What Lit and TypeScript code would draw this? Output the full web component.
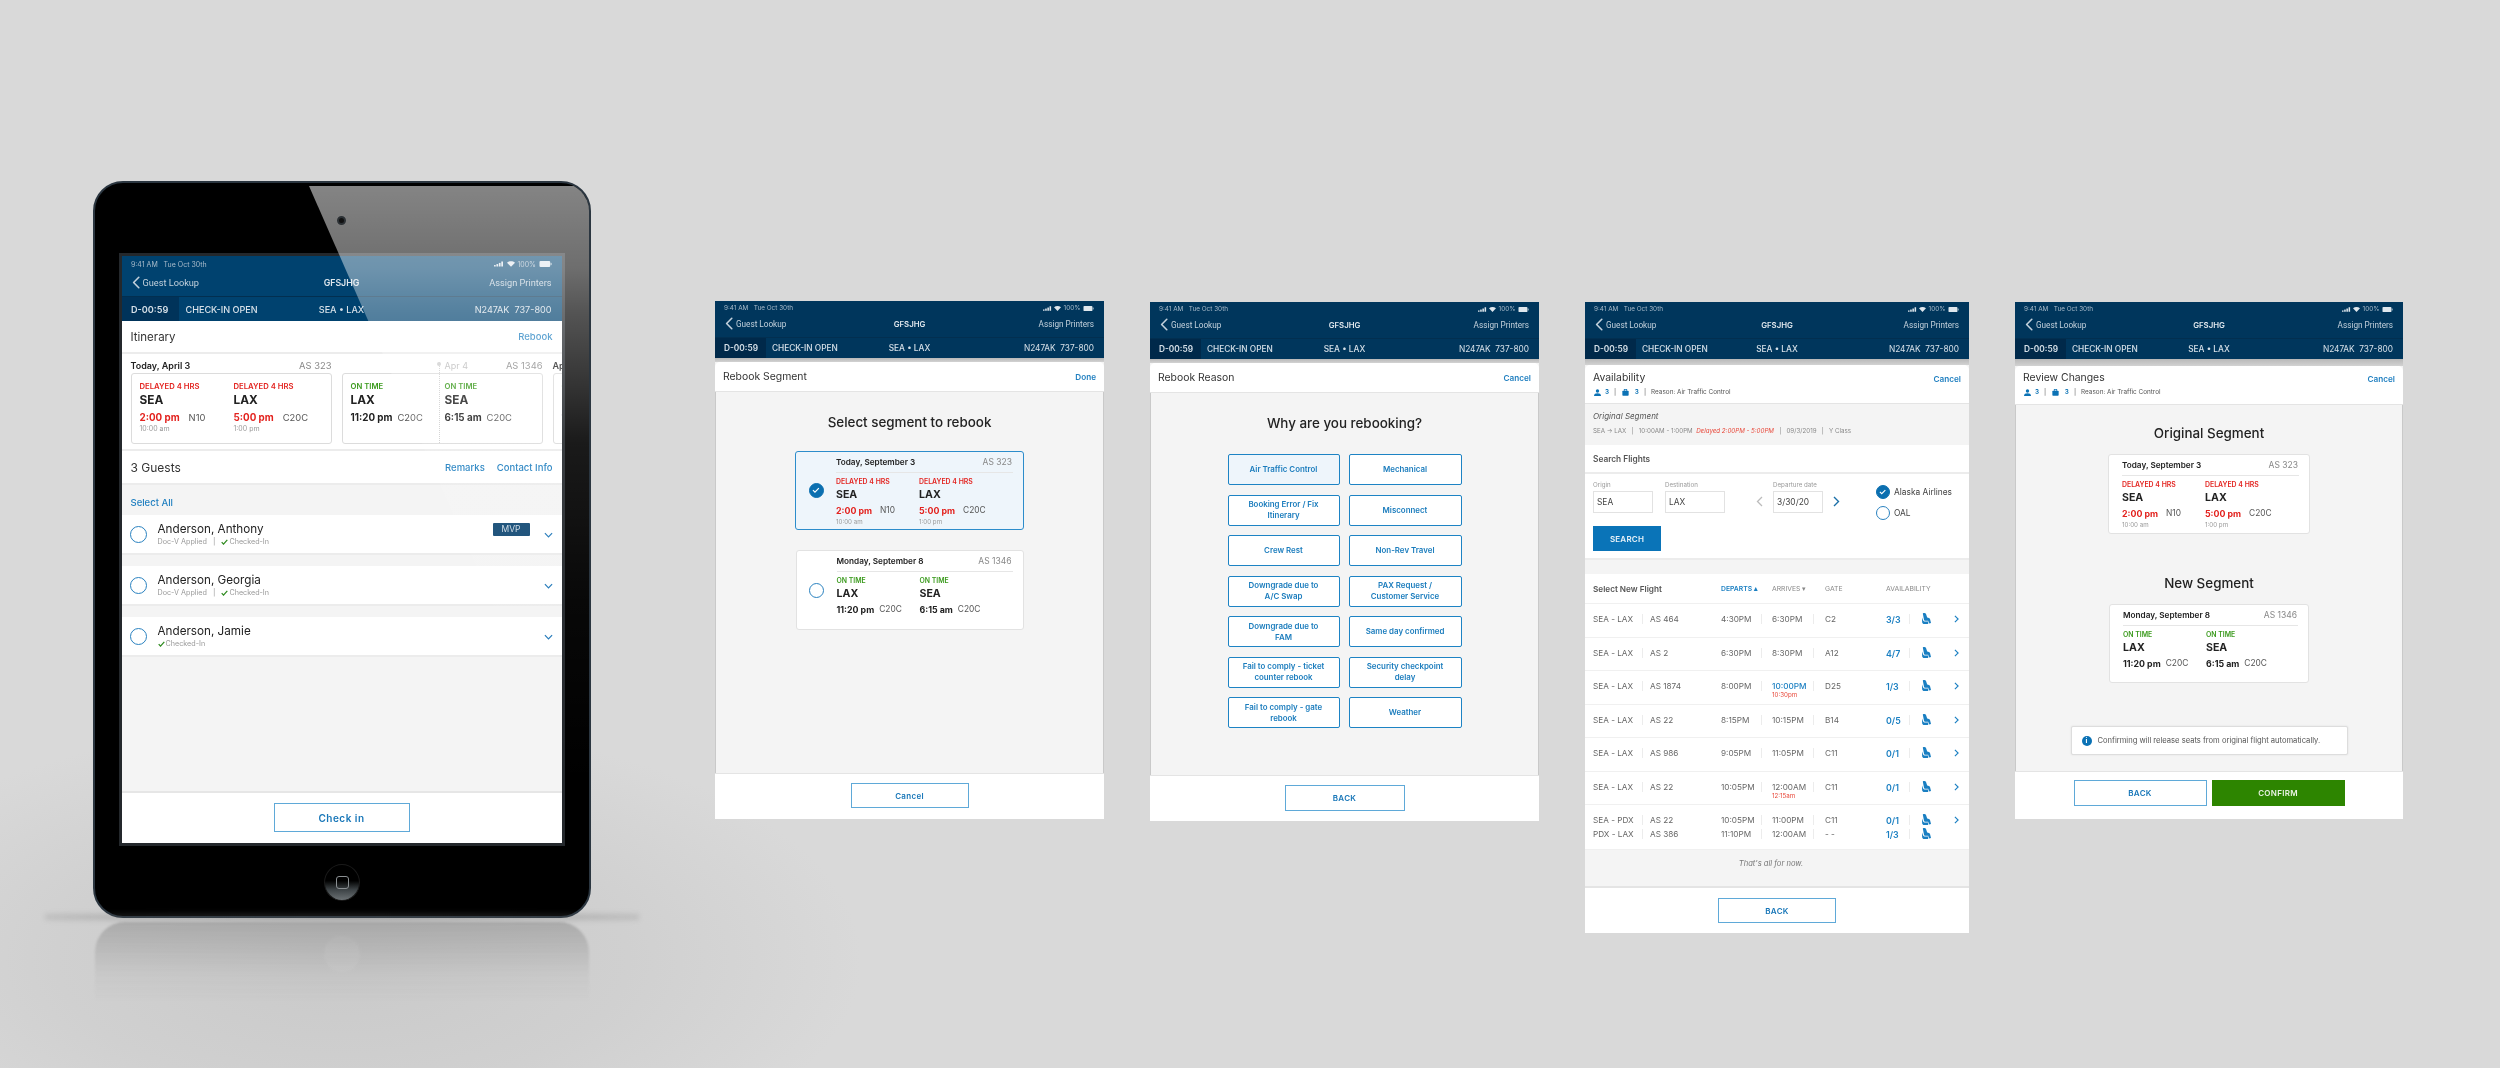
import { LitElement, html, css } from "lit";
import { customElement } from "lit/decorators.js";

const chevL = html`<svg class="chevl" viewBox="0 0 10 16"><path d="M8.5 1.5 2 8l6.5 6.5" fill="none" stroke="currentColor" stroke-width="2" stroke-linecap="round" stroke-linejoin="round"/></svg>`;
const signal = html`<svg class="i-sig" viewBox="0 0 14 7"><rect x="0" y="5" width="2.4" height="2" fill="currentColor"/><rect x="3.4" y="3.6" width="2.4" height="3.4" fill="currentColor"/><rect x="6.8" y="2" width="2.4" height="5" fill="currentColor"/><rect x="10.2" y="0" width="2.4" height="7" fill="currentColor"/></svg>`;
const wifi = html`<svg class="i-wifi" viewBox="0 0 10 7"><path d="M5 7 0 1.8C3-.6 7-.6 10 1.8z" fill="currentColor"/></svg>`;
const battery = html`<svg class="i-bat" viewBox="0 0 14 7"><rect x="0" y="0" width="12.5" height="7" rx="1.2" fill="currentColor"/><rect x="13" y="2.2" width="1" height="2.6" fill="currentColor"/></svg>`;
const check = html`<svg class="tick" viewBox="0 0 10 8"><path d="M1 4.2 3.6 7 9 1" fill="none" stroke="#2d8a1e" stroke-width="1.8"/></svg>`;
const chevD = html`<svg class="chevd" viewBox="0 0 10 6"><path d="M1 1l4 4 4-4" fill="none" stroke="#1f77b8" stroke-width="1.3"/></svg>`;
const chevR = html`<svg class="chevr" viewBox="0 0 6 10"><path d="M1 1l4 4-4 4" fill="none" stroke="#1a7fc2" stroke-width="1.4"/></svg>`;
const radioOff = html`<span class="radio"></span>`;
const radioOn = html`<span class="radio on"><svg viewBox="0 0 10 8"><path d="M1.2 4 3.8 6.6 8.8 1.4" fill="none" stroke="#fff" stroke-width="1.5"/></svg></span>`;
const person = html`<svg class="mini" viewBox="0 0 10 10"><circle cx="5" cy="2.8" r="2.4" fill="#0b72b5"/><path d="M0 10c0-3 2-4 5-4s5 1 5 4z" fill="#0b72b5"/></svg>`;
const bag = html`<svg class="mini" viewBox="0 0 10 10"><rect x="0.5" y="2.5" width="9" height="7" rx="1" fill="#0b72b5"/><rect x="3.2" y="0.8" width="3.6" height="2.4" fill="none" stroke="#0b72b5"/></svg>`;
const seat = html`<svg class="seat" viewBox="0 0 9 11"><path d="M.8.4C1.8-.3 3.6-.1 4 1L5.2 4.4 7 5C7.6 5.2 7.8 5.6 8 6.1L9 10 7.2 10.5 6.2 7.8H3.4C2.6 7.8 2.2 7.4 2 6.8Z" fill="#1a7fc2"/><path d="M0 4.6C.8 7 1.2 8.2 2.2 8.6H6.2V11H2.2C1 11 .4 10.4.2 9.5L0 7Z" fill="#1a7fc2"/></svg>`;

type Leg = { status: string; code: string; time: string; gate: string; old?: string };
const delayed: Leg[] = [
  { status: "DELAYED 4 HRS", code: "SEA", time: "2:00 pm", gate: "N10", old: "10:00 am" },
  { status: "DELAYED 4 HRS", code: "LAX", time: "5:00 pm", gate: "C20C", old: "1:00 pm" },
];
const ontime: Leg[] = [
  { status: "ON TIME", code: "LAX", time: "11:20 pm", gate: "C20C" },
  { status: "ON TIME", code: "SEA", time: "6:15 am", gate: "C20C" },
];

const flights = [
  [["SEA - LAX", "AS 464", "4:30PM", "6:30PM", "C2", "3/3"]],
  [["SEA - LAX", "AS 2", "6:30PM", "8:30PM", "A12", "4/7"]],
  [["SEA - LAX", "AS 1874", "8:00PM", "10:00PM", "D25", "1/3", "10:30pm"]],
  [["SEA - LAX", "AS 22", "8:15PM", "10:15PM", "B14", "0/5"]],
  [["SEA - LAX", "AS 986", "9:05PM", "11:05PM", "C11", "0/1"]],
  [["SEA - LAX", "AS 22", "10:05PM", "12:00AM", "C11", "0/1", "12:15am"]],
  [
    ["SEA - PDX", "AS 22", "10:05PM", "11:00PM", "C11", "0/1"],
    ["PDX - LAX", "AS 386", "11:10PM", "12:00AM", "- -", "1/3"],
  ],
];

const reasons = [
  ["Air Traffic Control", "Mechanical"],
  ["Booking Error / Fix\nItinerary", "Misconnect"],
  ["Crew Rest", "Non-Rev Travel"],
  ["Downgrade due to\nA/C Swap", "PAX Request /\nCustomer Service"],
  ["Downgrade due to\nFAM", "Same day confirmed"],
  ["Fail to comply - ticket\ncounter rebook", "Security checkpoint\ndelay"],
  ["Fail to comply - gate\nrebook", "Weather"],
];

@customElement("app-root")
export class AppRoot extends LitElement {
  static styles = css`
    :host { display: block; width: 2500px; height: 1068px; overflow: hidden; font-family: Inter, "Liberation Sans", sans-serif; color: #222; }
    * { box-sizing: border-box; }
    .stage { display: flex; align-items: flex-start; width: 2500px; height: 1068px; padding-left: 93px; background: radial-gradient(ellipse 520px 240px at 342px 960px, #c9c9c9 0%, #d0d0d0 55%, #d9d9d9 100%), #d9d9d9; }

    /* tablet */
    .tablet { position: relative; flex: none; width: 498px; height: 737px; margin-top: 181px; margin-right: 124px; background: #000; border-radius: 30px; border: 2px solid #2b3640; display: flex; flex-direction: column; align-items: center; padding-top: 33px; }
    .camera { position: relative; z-index: 2; width: 9px; height: 9px; border-radius: 50%; background: #111; border: 2px solid #2c3135; margin-bottom: 31px; margin-left: -1px; }
    .home { position: relative; z-index: 2; width: 36px; height: 37px; border-radius: 50%; margin-top: 21px; background: linear-gradient(#000 45%, #3c4245 70%, #6b7174 100%); display: flex; align-items: center; justify-content: center; border: 1px solid #1a1a1a; }
    .home i { width: 13px; height: 13px; border: 1px solid #8a8f92; border-radius: 3px; }
    .glare { position: absolute; inset: 0; border-radius: 28px; background: linear-gradient(180deg, rgba(255,255,255,.52) 0, rgba(255,255,255,.43) 85px, rgba(255,255,255,.33) 130px, rgba(255,255,255,.1) 260px, rgba(255,255,255,.03) 420px, rgba(255,255,255,0) 600px); clip-path: polygon(214px 3px, 498px 3px, 498px 645px, 496px 645px); pointer-events: none; }
    .smear { position: absolute; left: -50px; right: -50px; bottom: -5px; height: 8px; background: radial-gradient(ellipse at center, rgba(80,80,80,.42), rgba(100,100,100,.18) 72%, rgba(120,120,120,0) 100%); filter: blur(2.5px); }
    .reflect { position: absolute; left: 0; right: 0; top: 100%; margin-top: 6px; height: 80px; border-radius: 30px 30px 0 0; background: linear-gradient(180deg, rgba(90,90,90,.3), rgba(130,130,130,.08) 65%, rgba(160,160,160,0)); display: flex; justify-content: center; filter: blur(1px); }
    .reflect i { width: 36px; height: 36px; border-radius: 50%; margin-top: 14px; background: rgba(255,255,255,.05); }

    .screen { flex: none; display: flex; flex-direction: column; background: #f4f4f4; overflow: hidden; }
    .big { width: 440px; height: 587px; outline: 3px solid #24282c; margin-left: -1px; filter: blur(.35px); }
    .small { filter: blur(.3px); }
    .s2 { width: 389px; height: 518px; margin-top: 301px; margin-right: 46px; }
    .s3 { width: 389px; height: 519px; margin-top: 302px; margin-right: 46px; }
    .s4 { width: 384px; height: 631px; margin-top: 302px; margin-right: 46px; }
    .s5 { width: 388px; height: 517px; margin-top: 302px; }

    /* nav */
    .nav { flex: none; background: #00365c; color: #d6e0e8; }
    .big .nav { background: #00426f; }
    .status { height: 14px; display: flex; align-items: center; justify-content: space-between; padding: 0 10px 0 9px; font-size: 6.4px; color: #a9bccb; white-space: pre; }
    .big .status { height: 16px; font-size: 7px; padding: 0 10px 0 9.5px; }
    .status .ic { display: flex; align-items: center; gap: 2.5px; color: #dfe7ed; }
    .status .ic span { color: #a9bccb; }
    .i-sig { width: 9px; height: 5px; }
    .i-wifi { width: 7px; height: 5px; }
    .i-bat { width: 11px; height: 5px; }
    .big .i-sig { width: 10px; height: 6px; }
    .big .i-wifi { width: 8px; height: 6px; }
    .big .i-bat { width: 13px; height: 6px; }
    .row1 { height: 22px; padding: 0 10px 5px; display: grid; grid-template-columns: 1fr auto 1fr; align-items: center; font-family: Roboto, Inter, sans-serif; font-size: 8.2px; color: #c3d1dc; }
    .big .row1 { height: 24px; font-size: 9.2px; padding-bottom: 4px; }
    .row1 .back { display: flex; align-items: center; gap: 3px; }
    .chevl { width: 8px; height: 13px; }
    .row1 b { font-family: Inter, sans-serif; font-weight: 600; color: #dfe7ed; font-size: 7.8px; }
    .big .row1 b { font-size: 8.8px; }
    .row1 span:last-child { text-align: right; }
    .row2 { height: 21px; display: grid; grid-template-columns: 1fr auto 1fr; align-items: center; font-size: 8.3px; font-weight: 500; color: #d6e0e8; border-top: 1px solid #022f50; }
    .big .row2 { height: 25px; font-size: 9.1px; }
    .row2 .l { display: flex; align-items: center; height: 100%; }
    .timer { background: #00294a; height: 100%; display: flex; align-items: center; padding: 0 7px 0 9px; width: 51px; margin-right: 6px; white-space: nowrap; font-weight: 600; }
    .big .timer { width: 57px; margin-right: 7px; padding-left: 9.5px; background: #00335a; }
    .row2 .r { text-align: right; padding-right: 10px; font-weight: 400; white-space: pre; }
    .row2 .c { font-weight: 500; }

    /* tablet contents */
    .h-row { flex: none; height: 33px; background: #fff; display: flex; align-items: center; justify-content: space-between; padding: 0 9px; font-size: 11.5px; border-bottom: 2px solid #ececec; color: #333; }
    .link { color: #1f7fc0; font-size: 9.5px; font-weight: 500; }
    .links { display: flex; gap: 12px; }
    .itin { position: relative; flex: none; height: 97px; background: #fff; overflow: hidden; display: flex; gap: 10px; padding: 4px 0 0 9px; border-bottom: 2px solid #ececec; }
    .timeline { position: absolute; left: 317px; top: 8px; height: 81px; border-left: 1px dotted #cfcfcf; }
    .timeline::before { content: ""; position: absolute; left: -2.5px; top: 0; width: 4px; height: 4px; border-radius: 50%; background: #cfcfcf; }
    .seg { flex: none; width: 201px; }
    .seg-h { height: 15px; display: flex; align-items: center; justify-content: space-between; font-size: 9px; font-weight: 600; color: #222; }
    .seg-h span { color: #888; font-size: 9.4px; font-weight: 400; }
    .seg-h.faded { font-weight: 400; color: #bbb; padding-left: 103px; }
    .seg-c { height: 71px; border: 1px solid #dcdcdc; border-radius: 3px; display: grid; grid-template-columns: 94px 1fr; padding: 8px 0 0 8px; background: #fff; }
    .g-row { flex: none; height: 34px; background: #fff; display: flex; align-items: center; justify-content: space-between; padding: 0 9px; font-size: 12px; border-bottom: 2px solid #ececec; color: #333; }
    .sel { flex: none; height: 30px; display: flex; align-items: center; padding: 4px 9px 0; font-size: 9.5px; color: #1f7fc0; font-weight: 500; }
    .guest { flex: none; height: 40px; background: #fff; display: flex; align-items: center; padding: 1px 9px 0 8px; border-bottom: 2px solid #ececec; position: relative; }
    .guest + .guest { margin-top: 11px; }
    .guest .radio { width: 17px; height: 17px; margin-right: 11px; }
    .gname { font-size: 11.7px; color: #222; line-height: 14px; }
    .gsub { font-size: 7.2px; color: #999; line-height: 11px; display: flex; align-items: center; white-space: pre; }
    .tick { width: 7px; height: 6px; margin-right: 1px; }
    .mvp { margin-left: auto; width: 37px; height: 13px; background: #134a74; color: #cfdce6; font-size: 8.5px; display: flex; align-items: center; justify-content: center; margin-top: -11px; border-radius: 1px; }
    .chevd { width: 9px; height: 6px; margin-left: 14px; }
    .guest .push { margin-left: auto; }
    .spacer { flex: 1; }
    .foot { flex: none; background: #fff; display: flex; justify-content: center; align-items: flex-start; gap: 5px; }
    .tfoot { height: 52px; border-top: 2px solid #e6e6e6; padding-top: 10px; }
    .btn { display: flex; align-items: center; justify-content: center; border: 1px solid #5fa9d8; color: #1776b8; font-weight: 600; font-size: 8px; letter-spacing: .3px; background: #fff; }
    .tfoot .btn { width: 136px; height: 29px; font-size: 10px; letter-spacing: .5px; }

    /* modal */
    .gap { flex: none; background: linear-gradient(#b8b8b8, #d2d2d2); }
    .g4 { height: 4px; }
    .g5 { height: 6px; }
    .g7 { height: 7px; }
    .mhead { flex: none; background: #fff; border-radius: 5px 5px 0 0; display: flex; justify-content: space-between; align-items: center; padding: 0 8px; height: 30px; font-size: 10.4px; color: #333; border-bottom: 1px solid #e4e4e4; }
    .mhead .link { font-size: 8.2px; font-weight: 600; }
    .mhead.two { height: 39px; align-items: flex-start; padding-top: 5px; }
    .mhead.two .link { margin-top: 3px; }
    .s4 .mhead.two { padding-top: 6px; }
    .mhead small { display: flex; align-items: center; font-size: 6.4px; color: #555; gap: 5px; margin-top: 4px; white-space: pre; }
    .mhead small b { color: #0b72b5; font-weight: 600; }
    .mini { width: 7px; height: 7px; margin-left: 1px; margin-right: -1px; }
    .mbody { flex: 1; display: flex; flex-direction: column; align-items: center; background: #f4f4f4; border-left: 1px solid #c9c9c9; border-right: 1px solid #c9c9c9; min-height: 0; }
    .mtitle { font-size: 13.4px; font-weight: 500; color: #222; text-align: center; line-height: 16px; margin-top: 22px; }
    .mtitle.t20 { margin-top: 20px; }
    .mtitle.t41 { margin-top: 41px; }
    .mfoot { height: 46px; padding-top: 9px; border-top: 1px solid #e4e4e4; }
    .mfoot .btn { width: 120px; height: 26px; }
    .mfoot .btn.w118 { width: 118px; height: 25px; }
    .mfoot .btn.w133 { width: 133px; }
    .s4 .mfoot { padding-top: 10px; }
    .s5 .mfoot { height: 48px; padding-top: 8px; }

    .card { background: #fff; border: 1px solid #e2e2e2; border-radius: 3px; display: flex; }
    .card.sel-on { background: #eef5fb; border: 1.5px solid #2c8ccb; }
    .card.pick1 { width: 229px; height: 79px; margin-top: 21px; }
    .card.pick2 { width: 228px; height: 80px; margin-top: 20px; }
    .card.rev1 { width: 202px; height: 80px; margin-top: 13px; }
    .card.rev2 { width: 200px; height: 79px; margin-top: 13px; }
    .card .rad { flex: none; width: 40px; display: flex; align-items: center; justify-content: center; }
    .card .rad .radio { width: 15px; height: 15px; }
    .card .pad { flex: none; width: 13px; }
    .card .inner { flex: 1; padding-right: 10px; min-width: 0; }
    .c-h { height: 21px; display: flex; justify-content: space-between; align-items: center; border-bottom: 1px solid #e6e6e6; font-size: 8.2px; font-weight: 600; color: #222; white-space: nowrap; }
    .c-h span { font-weight: 400; color: #888; font-size: 8.5px; padding-right: 1px; }
    .legs { display: grid; grid-template-columns: 83px 1fr; padding-top: 4px; }
    .leg { min-width: 0; }
    .st { font-size: 6.9px; font-weight: 600; line-height: 9px; white-space: nowrap; color: #e3231f; }
    .st.ok { color: #3a9a1c; }
    .code { font-size: 10.6px; font-weight: 700; line-height: 14px; color: #222; margin-top: 2px; }
    .tm { display: flex; align-items: center; font-size: 8.8px; font-weight: 700; line-height: 13px; margin-top: 2px; white-space: nowrap; color: #222; }
    .tm.red { color: #e3231f; }
    .tm i { font-style: normal; font-weight: 400; color: #555; margin-left: 8px; font-size: 8.4px; }
    .tm.ok i { margin-left: 5px; }
    .oldt { font-size: 6.2px; color: #999; line-height: 8px; margin-top: 1px; white-space: nowrap; }
    .big .st { font-size: 7.7px; line-height: 10px; }
    .big .code { font-size: 11.8px; margin-top: 1px; line-height: 15px; }
    .big .tm { font-size: 9.8px; margin-top: 3px; }
    .big .tm i { font-size: 9.4px; margin-left: 9px; }
    .big .tm.ok i { margin-left: 5px; }
    .big .oldt { font-size: 7px; line-height: 10px; margin-top: 0; }

    .radio { display: inline-flex; flex: none; width: 14px; height: 14px; border-radius: 50%; border: 1.4px solid #2a82c0; align-items: center; justify-content: center; background: transparent; }
    .radio.on { background: #0b6fb0; border-color: #0b6fb0; }
    .radio.on svg { width: 60%; }

    .grid { display: grid; grid-template-columns: 112px 113px; column-gap: 9px; row-gap: 9.5px; margin-top: 23px; }
    .rbtn { height: 31px; border: 1px solid #1d83c4; border-radius: 2px; background: #fff; color: #1a7cbd; font-size: 7.9px; font-weight: 600; line-height: 11px; display: flex; align-items: center; justify-content: center; text-align: center; white-space: pre-line; }
    .rbtn.on { background: #eef5fb; }

    /* availability */
    .orig { flex: none; height: 41px; background: #f4f4f4; padding: 6px 8px 0; }
    .orig em { font-size: 8px; color: #555; display: block; line-height: 12px; }
    .orig div { font-size: 6.2px; color: #888; margin-top: 5px; white-space: pre; display: flex; }
    .orig div em { font-size: 6.2px; color: #e8483a; display: inline; line-height: inherit; }
    .sf { flex: none; height: 29px; background: #fff; display: flex; align-items: center; padding: 0 8px; font-size: 8.3px; font-weight: 600; color: #555; border-bottom: 2px solid #ececec; }
    .form { flex: none; height: 86px; background: #fff; padding: 6px 8px 0; border-bottom: 2px solid #ececec; display: flex; flex-direction: column; }
    .f-row { display: flex; align-items: flex-start; }
    .fld { display: flex; flex-direction: column; font-size: 6.2px; color: #999; line-height: 10px; }
    .fld span { margin-top: 1px; height: 22px; border: 1px solid #e2e2e2; color: #444; font-size: 8.4px; display: flex; align-items: center; padding-left: 3px; width: 60px; }
    .fld.d span { width: 50px; }
    .fld.m12 { margin-right: 12px; }
    .fld.m31 { margin-right: 31px; }
    .fld.m10 { margin-right: 10px; }
    .arrow { width: 7px; height: 11px; margin-top: 16px; }
    .arrow.prev { margin-right: 10px; }
    .air { margin-left: auto; margin-right: 9px; display: flex; flex-direction: column; gap: 7px; margin-top: 5px; font-size: 8.4px; color: #444; }
    .air div { display: flex; align-items: center; gap: 4px; }
    .search { width: 68px; height: 25px; background: #0a74b8; color: #e8f2f8; font-size: 8px; font-weight: 600; display: flex; align-items: center; justify-content: center; margin-top: 6px; letter-spacing: .2px; }
    .lhead { flex: none; margin-top: 14px; height: 30px; background: #fff; display: grid; align-items: center; font-size: 6.8px; color: #888; border-bottom: 1px solid #f0f0f0; grid-template-columns: 128px 51px 53px 61px 1fr; padding-left: 8px; }
    .lhead b { font-size: 8.2px; font-weight: 600; color: #555; }
    .lhead .act { color: #1a7fc2; font-weight: 600; }
    .frow { flex: none; background: #fff; border-bottom: 1px solid #f0f0f0; height: 33.5px; padding: 10px 0 0 8px; display: grid; grid-template-columns: 57px 71px 51px 53px 61px 36px 32px 1fr; grid-auto-rows: 14px; font-size: 8.2px; color: #666; position: relative; }
    .frow.tall { height: 45px; }
    .frow > span { white-space: nowrap; display: flex; align-items: flex-start; line-height: 11px; }
    .frow .v { position: relative; }
    .frow .v::after { content: ""; position: absolute; top: 0; height: 10px; width: 1px; background: #ececec; }
    .frow .a1::after { left: 49px; }
    .frow .a2::after { left: 40px; }
    .frow .a3::after { left: 41px; }
    .frow .a4::after { left: 23px; }
    .frow .av { color: #1a7fc2; font-weight: 600; font-size: 8.8px; }
    .frow .blue { color: #1a7fc2; font-weight: 500; }
    .frow .late { position: absolute; color: #e8483a; font-size: 6.2px; line-height: 8px; top: 20px; left: 187px; }
    .seat { width: 9px; height: 11px; margin-top: -1px; }
    .chevr { width: 5px; height: 8px; margin-top: 1px; }
    .done { flex: 1; background: #f4f4f4; font-size: 7.6px; font-style: italic; color: #777; text-align: center; padding-top: 9px; padding-right: 12px; border-bottom: 1px solid #e4e4e4; }

    /* review */
    .info { width: 277px; height: 29px; margin-bottom: 16px; background: #fff; border: 1px solid #ddd; border-radius: 2px; box-shadow: 0 0 2px rgba(0,0,0,.1); font-size: 7.6px; color: #555; display: flex; align-items: center; padding-left: 10px; gap: 6px; white-space: nowrap; }
    .info i { width: 10px; height: 10px; border-radius: 50%; background: #0b72b5; color: #fff; font-size: 7px; font-style: normal; font-weight: 700; display: flex; align-items: center; justify-content: center; }
    .mfoot .btn.green { background: #2d8500; border-color: #2d8500; color: #e9f3e2; }
  `;

  private navbar() {
    return html`<div class="nav">
      <div class="status"><span>9:41 AM   Tue Oct 30th</span><span class="ic">${signal}${wifi}<span>100%</span>${battery}</span></div>
      <div class="row1"><span class="back">${chevL}Guest Lookup</span><b>GFSJHG</b><span>Assign Printers</span></div>
      <div class="row2"><div class="l"><span class="timer">D-00:59</span><span>CHECK-IN OPEN</span></div><span class="c">SEA • LAX</span><span class="r">N247AK  737-800</span></div>
    </div>`;
  }

  private legs(legs: Leg[]) {
    return legs.map((l) => {
      const ok = !l.old;
      return html`<div class="leg">
        <div class="st ${ok ? "ok" : ""}">${l.status}</div>
        <div class="code">${l.code}</div>
        <div class="tm ${ok ? "ok" : "red"}">${l.time}<i>${l.gate}</i></div>
        ${l.old ? html`<div class="oldt">${l.old}</div>` : ""}
      </div>`;
    });
  }

  private segCard(date: string, fl: string, legs: Leg[], cls: string, opt: { on?: boolean; radio?: boolean } = {}) {
    return html`<div class="card ${cls} ${opt.on ? "sel-on" : ""}">
      ${opt.radio ? html`<div class="rad">${opt.on ? radioOn : radioOff}</div>` : html`<div class="pad"></div>`}
      <div class="inner"><div class="c-h">${date}<span>${fl}</span></div><div class="legs">${this.legs(legs)}</div></div>
    </div>`;
  }

  private tablet() {
    const seg = (d: string, f: string, legs: Leg[], faded = false) => html`<div class="seg">
      <div class="seg-h ${faded ? "faded" : ""}">${d}<span>${f}</span></div>
      <div class="seg-c">${this.legs(legs)}</div>
    </div>`;
    const guest = (name: string, doc: boolean, mvp = false) => html`<div class="guest">${radioOff}
      <div><div class="gname">${name}</div><div class="gsub">${doc ? html`Doc-V Applied   |   ` : ""}${check}Checked-In</div></div>
      ${mvp ? html`<span class="mvp">MVP</span>` : html`<span class="push"></span>`}${chevD}</div>`;
    return html`<div class="tablet">
      <div class="smear"></div>
      <div class="reflect"><i></i></div>
      <div class="camera"></div>
      <div class="screen big">
        ${this.navbar()}
        <div class="h-row">Itinerary<span class="link">Rebook</span></div>
        <div class="itin">
          ${seg("Today, April 3", "AS 323", delayed)}
          ${seg("Apr 4", "AS 1346", ontime, true)}
          ${seg("Apr 5", "AS 1346", ontime)}
          <div class="timeline"></div>
        </div>
        <div class="g-row">3 Guests<span class="links"><span class="link">Remarks</span><span class="link">Contact Info</span></span></div>
        <div class="sel">Select All</div>
        ${guest("Anderson, Anthony", true, true)}
        ${guest("Anderson, Georgia", true)}
        ${guest("Anderson, Jamie", false)}
        <div class="spacer"></div>
        <div class="foot tfoot"><div class="btn">Check in</div></div>
      </div>
      <div class="home"><i></i></div>
      <div class="glare"></div>
    </div>`;
  }

  private rebook() {
    return html`<div class="screen small s2">
      ${this.navbar()}
      <div class="gap g4"></div>
      <div class="mhead">Rebook Segment<span class="link">Done</span></div>
      <div class="mbody">
        <div class="mtitle">Select segment to rebook</div>
        ${this.segCard("Today, September 3", "AS 323", delayed, "pick1", { on: true, radio: true })}
        ${this.segCard("Monday, September 8", "AS 1346", ontime, "pick2", { radio: true })}
      </div>
      <div class="foot mfoot"><div class="btn w118">Cancel</div></div>
    </div>`;
  }

  private reason() {
    return html`<div class="screen small s3">
      ${this.navbar()}
      <div class="gap g4"></div>
      <div class="mhead">Rebook Reason<span class="link">Cancel</span></div>
      <div class="mbody">
        <div class="mtitle">Why are you rebooking?</div>
        <div class="grid">
          ${reasons.map((r, i) => r.map((t, j) => html`<div class="rbtn ${i === 0 && j === 0 ? "on" : ""}">${t}</div>`))}
        </div>
      </div>
      <div class="foot mfoot"><div class="btn">BACK</div></div>
    </div>`;
  }

  private sub() {
    return html`<small>${person}<b>3</b><span>|</span>${bag}<b> 3</b><span>|</span><span>Reason: Air Traffic Control</span></small>`;
  }

  private avail() {
    return html`<div class="screen small s4">
      ${this.navbar()}
      <div class="gap g5"></div>
      <div class="mhead two"><div>Availability${this.sub()}</div><span class="link">Cancel</span></div>
      <div class="orig"><em>Original Segment</em><div>SEA → LAX   |   10:00AM - 1:00PM  <em>Delayed 2:00PM - 5:00PM</em>   |   09/3/2019   |   Y Class</div></div>
      <div class="sf">Search Flights</div>
      <div class="form">
        <div class="f-row">
          <div class="fld m12">Origin<span>SEA</span></div>
          <div class="fld m31">Destination<span>LAX</span></div>
          <svg class="arrow prev" viewBox="0 0 7 11"><path d="M6 1 1.5 5.5 6 10" fill="none" stroke="#bbb" stroke-width="1.3"/></svg>
          <div class="fld d m10">Departure date<span>3/30/20</span></div>
          <svg class="arrow" viewBox="0 0 7 11"><path d="M1 1l4.5 4.5L1 10" fill="none" stroke="#1a6fa8" stroke-width="1.4"/></svg>
          <div class="air"><div>${radioOn}Alaska Airlines</div><div>${radioOff}OAL</div></div>
        </div>
        <div class="search">SEARCH</div>
      </div>
      <div class="lhead"><b>Select New Flight</b><span class="act">DEPARTS ▴</span><span>ARRIVES ▾</span><span>GATE</span><span>AVAILABILITY</span></div>
      ${flights.map((f) => html`<div class="frow ${f.length > 1 ? "tall" : ""}">
        ${f.map((r, i) => html`
          <span class="v a1">${r[0]}</span><span>${r[1]}</span><span class="v a2">${r[2]}</span>
          <span class="v a3 ${r[6] === "10:30pm" ? "blue" : ""}">${r[3]}</span><span>${r[4]}</span>
          <span class="v a4 av">${r[5]}</span><span>${seat}</span><span>${i === 0 ? chevR : ""}</span>
          ${r[6] ? html`<span class="late">${r[6]}</span>` : ""}`)}
      </div>`)}
      <div class="done">That's all for now.</div>
      <div class="foot mfoot"><div class="btn w118">BACK</div></div>
    </div>`;
  }

  private review() {
    return html`<div class="screen small s5">
      ${this.navbar()}
      <div class="gap g7"></div>
      <div class="mhead two"><div>Review Changes${this.sub()}</div><span class="link">Cancel</span></div>
      <div class="mbody">
        <div class="mtitle t20">Original Segment</div>
        ${this.segCard("Today, September 3", "AS 323", delayed, "rev1")}
        <div class="mtitle t41">New Segment</div>
        ${this.segCard("Monday, September 8", "AS 1346", ontime, "rev2")}
        <div class="spacer"></div>
        <div class="info"><i>i</i>Confirming will release seats from original flight automatically.</div>
      </div>
      <div class="foot mfoot"><div class="btn w133">BACK</div><div class="btn w133 green">CONFIRM</div></div>
    </div>`;
  }

  render() {
    return html`<div class="stage">${this.tablet()}${this.rebook()}${this.reason()}${this.avail()}${this.review()}</div>`;
  }
}
